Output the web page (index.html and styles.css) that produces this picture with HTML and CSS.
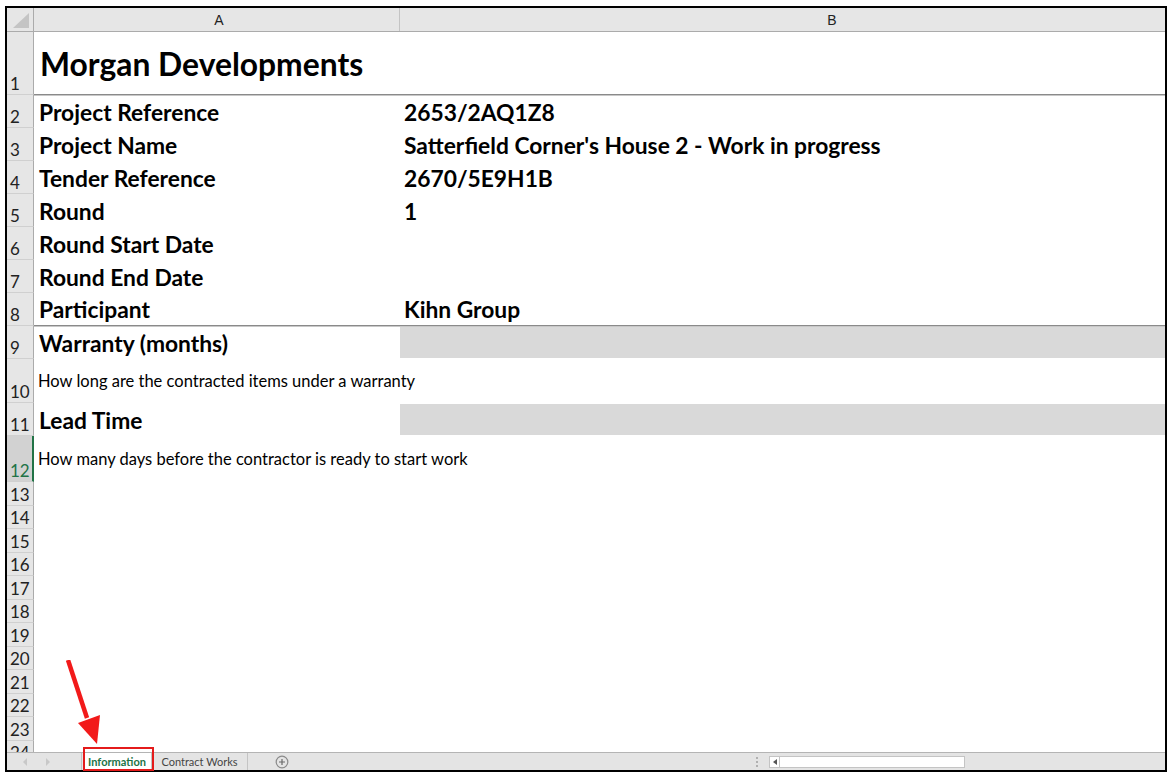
FILE: index.html
```html
<!DOCTYPE html>
<html>
<head>
<meta charset="utf-8">
<link rel="stylesheet" href="styles.css">
</head>
<body>
<div class="frame">
  <div class="sheet">
    <div class="row hdr">
      <div class="corner"><svg width="27" height="24" viewBox="0 0 27 24"><polygon points="22,5 22,20 6,20" fill="#c4c4c4"/></svg></div>
      <div class="colhead ca">A</div>
      <div class="colhead cb"><span class="bcenter">B</span></div>
    </div>
    <div class="row h63 line-below">
      <div class="rh">1</div>
      <div class="ca title">Morgan Developments</div>
      <div class="cb"></div>
    </div>
    <div class="row h33">
      <div class="rh">2</div>
      <div class="ca label">Project Reference</div>
      <div class="cb label">2653/2AQ1Z8</div>
    </div>
    <div class="row h33">
      <div class="rh">3</div>
      <div class="ca label">Project Name</div>
      <div class="cb label">Satterfield Corner's House 2 - Work in progress</div>
    </div>
    <div class="row h33">
      <div class="rh">4</div>
      <div class="ca label">Tender Reference</div>
      <div class="cb label">2670/5E9H1B</div>
    </div>
    <div class="row h33">
      <div class="rh">5</div>
      <div class="ca label">Round</div>
      <div class="cb label">1</div>
    </div>
    <div class="row h33">
      <div class="rh">6</div>
      <div class="ca label">Round Start Date</div>
      <div class="cb"></div>
    </div>
    <div class="row h33">
      <div class="rh">7</div>
      <div class="ca label">Round End Date</div>
      <div class="cb"></div>
    </div>
    <div class="row h33 line-below">
      <div class="rh">8</div>
      <div class="ca label">Participant</div>
      <div class="cb label">Kihn Group</div>
    </div>
    <div class="row h33">
      <div class="rh">9</div>
      <div class="ca label">Warranty (months)</div>
      <div class="cb"><div class="fill"></div></div>
    </div>
    <div class="row h44">
      <div class="rh">10</div>
      <div class="ca note">How long are the contracted items under a warranty</div>
      <div class="cb"></div>
    </div>
    <div class="row h33">
      <div class="rh">11</div>
      <div class="ca label">Lead Time</div>
      <div class="cb"><div class="fill"></div></div>
    </div>
    <div class="row h46">
      <div class="rh sel">12</div>
      <div class="ca note">How many days before the contractor is ready to start work</div>
      <div class="cb"></div>
    </div>
    <div class="row hs"><div class="rh">13</div><div class="ca"></div><div class="cb"></div></div>
    <div class="row hs"><div class="rh">14</div><div class="ca"></div><div class="cb"></div></div>
    <div class="row hs"><div class="rh">15</div><div class="ca"></div><div class="cb"></div></div>
    <div class="row hs"><div class="rh">16</div><div class="ca"></div><div class="cb"></div></div>
    <div class="row hs"><div class="rh">17</div><div class="ca"></div><div class="cb"></div></div>
    <div class="row hs"><div class="rh">18</div><div class="ca"></div><div class="cb"></div></div>
    <div class="row hs"><div class="rh">19</div><div class="ca"></div><div class="cb"></div></div>
    <div class="row hs"><div class="rh">20</div><div class="ca"></div><div class="cb"></div></div>
    <div class="row hs"><div class="rh">21</div><div class="ca"></div><div class="cb"></div></div>
    <div class="row hs"><div class="rh">22</div><div class="ca"></div><div class="cb"></div></div>
    <div class="row hs"><div class="rh">23</div><div class="ca"></div><div class="cb"></div></div>
    <div class="row hs"><div class="rh">24</div><div class="ca"></div><div class="cb"></div></div>
  </div>
  <div class="tabbar">
    <div class="nav">
      <svg width="6" height="8" viewBox="0 0 6 8"><polygon points="5,0 5,8 1,4" fill="#c8c8c8"/></svg>
      <svg width="6" height="8" viewBox="0 0 6 8"><polygon points="1,0 1,8 5,4" fill="#c8c8c8"/></svg>
    </div>
    <div class="tab active">Information</div>
    <div class="tab works">Contract Works</div>
    <div class="addtab"><svg width="14" height="14" viewBox="0 0 14 14"><circle cx="7" cy="7" r="5.8" fill="none" stroke="#8a8a8a" stroke-width="1.2"/><path d="M7 4v6M4 7h6" stroke="#6a6a6a" stroke-width="1.2"/></svg></div>
    <div class="spacer"></div>
    <div class="grip"><span></span><span></span><span></span></div>
    <div class="hscroll">
      <div class="sbtn"><svg width="4" height="6" viewBox="0 0 4 6"><polygon points="4,0 4,6 0,3" fill="#555"/></svg></div>
      <div class="strack"></div>
    </div>
    <div class="rest"></div>
  </div>
  <div class="redbox"></div>
</div>
<svg class="arrow" width="120" height="100" viewBox="0 0 120 100">
  <line x1="68" y1="0" x2="87" y2="58" stroke="#f21a1a" stroke-width="4.5"/>
  <polygon points="97,84 78,63 100,55" fill="#f21a1a"/>
</svg>
</body>
</html>
```

FILE: styles.css
```css
* { box-sizing: border-box; }
html, body { margin: 0; padding: 0; background: #fff; }
body { font-family: Lato, "Liberation Sans", sans-serif; color: #000; position: relative; width: 1173px; height: 778px; overflow: hidden; }

.frame {
  position: relative;
  margin: 6px 0 0 5px;
  width: 1162px;
  height: 766px;
  border: 2px solid #000;
  display: flex;
  flex-direction: column;
  background: #fff;
}

.sheet {
  height: 744px;
  overflow: hidden;
  display: flex;
  flex-direction: column;
}

.row { display: flex; flex: 0 0 auto; }
.hdr { height: 24px; background: #e6e6e6; border-bottom: 1px solid #ababab; }
.h63 { height: 63px; }
.h33 { height: 33px; }
.h44 { height: 44px; }
.h46 { height: 46px; }
.hs { height: 23.5px; }

.corner { width: 27px; border-right: 1px solid #ababab; }
.corner svg { display: block; }

.colhead {
  display: flex; align-items: center; justify-content: center;
  font-family: "Liberation Sans", Arial, sans-serif;
  font-size: 14px; color: #222;
}
.colhead.ca { border-right: 1px solid #c4c4c4; }
.colhead.cb { justify-content: flex-start; overflow: hidden; }
.bcenter { display: block; width: 856px; flex: 0 0 856px; text-align: center; }

.rh {
  width: 27px; flex: 0 0 27px;
  background: #e6e6e6;
  border-right: 1px solid #ababab;
  border-bottom: 1px solid #d0d0d0;
  display: flex; align-items: flex-end;
  padding: 0 0 1px 3px;
  font-family: Lato, "Liberation Sans", sans-serif;
  font-size: 17px; line-height: 18px; color: #222;
}
.rh.sel { background: #d2d2d2; color: #217346; border-right: 2px solid #217346; }

.ca { width: 366px; flex: 0 0 366px; display: flex; align-items: center; padding-left: 5px; white-space: nowrap; }
.cb { flex: 1 1 auto; display: flex; align-items: center; padding-left: 4px; white-space: nowrap; }

.line-below .ca, .line-below .cb { border-bottom: 1px solid #8a8a8a; box-shadow: 0 1px 0 #c8c8c8; }

.title { font-weight: 700; font-size: 31.8px; padding-left: 6px; padding-top: 2px; }
.label { font-weight: 700; font-size: 22.8px; }
.note { font-size: 16.5px; padding-left: 4px; overflow: visible; }

.cb .fill { width: calc(100% + 4px); margin-left: -4px; height: 31px; background: #d9d9d9; align-self: center; }

.tabbar {
  height: 18px;
  background: #e4e4e4;
  border-top: 1px solid #b4b4b4;
  display: flex;
  align-items: stretch;
  font-family: Lato, "Liberation Sans", sans-serif;
  font-size: 11px;
  white-space: nowrap;
}
.nav { width: 75px; display: flex; align-items: center; padding-left: 15px; gap: 17px; border-right: 1px solid #c4c4c4; }
.nav svg { display: block; }
.tab {
  display: flex; align-items: center; justify-content: center;
  color: #444;
  border-right: 1px solid #c4c4c4;
}
.tab.active { background: #fff; color: #217346; font-weight: 700; width: 69px; margin-left: 1px; }
.tab.works { width: 96px; }
.addtab { width: 30px; display: flex; align-items: center; justify-content: center; margin-left: 19px; }
.addtab svg { display: block; }
.spacer { width: 454px; }
.grip { width: 12px; display: flex; flex-direction: column; align-items: center; justify-content: center; gap: 2px; }
.grip span { width: 2px; height: 2px; background: #b0b0b0; }
.hscroll { display: flex; align-items: center; margin-left: 6px; }
.sbtn { width: 11px; height: 12px; background: #fff; border: 1px solid #c4c4c4; display: flex; align-items: center; justify-content: center; }
.sbtn svg { display: block; }
.strack { width: 185px; height: 12px; background: #fff; border: 1px solid #c4c4c4; border-left: none; }
.rest { flex: 1; }

.redbox {
  position: absolute;
  left: 76px; top: 739px;
  width: 71px; height: 24px;
  border: 2px solid #e41b1b;
  pointer-events: none;
}

.arrow { position: absolute; left: 0; top: 660px; }
```
